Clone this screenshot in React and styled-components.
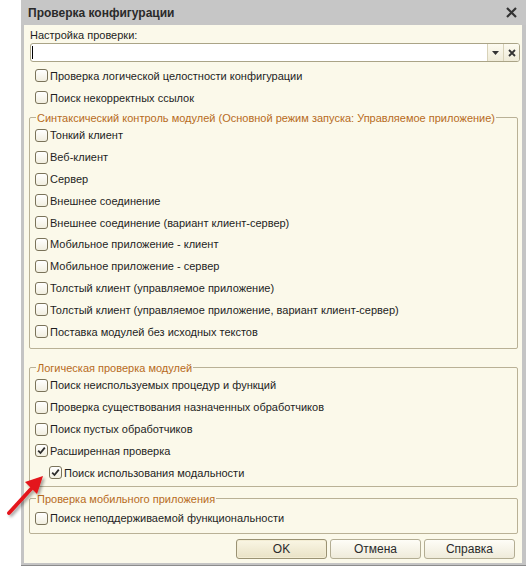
import React from 'react';
import styled, { createGlobalStyle } from 'styled-components';

const GlobalStyle = createGlobalStyle`
  html, body {
    margin: 0;
    padding: 0;
    background: #ffffff;
  }
  body {
    font-family: Arial, "Liberation Sans", sans-serif;
    font-size: 11px;
    color: #1e1e1e;
  }
`;

const Page = styled.div`
  position: relative;
  width: 526px;
  height: 567px;
  overflow: hidden;
`;

const Window = styled.div`
  margin-left: 21px;
  width: 498px;
  height: 563px;
  display: flex;
  flex-direction: column;
  background: #fbf9ea;
  border-left: 3px solid #c4c4c4;
  border-right: 4px solid #c4c4c4;
  border-bottom: 2px solid #c4c4c4;
  box-shadow: 0 1px 0 #8c8c8c;
`;

const TitleBar = styled.div`
  height: 25px;
  flex: none;
  display: flex;
  align-items: center;
  justify-content: space-between;
  background: #c6c6c6;
  margin-left: -3px;
  margin-right: -4px;
  padding: 0 9px 0 7px;
`;

const Title = styled.div`
  font-weight: bold;
  font-size: 12px;
  color: #2a2a2a;
`;

const Close = styled.svg`
  width: 11px;
  height: 11px;
`;

const Content = styled.div`
  flex: 1;
  display: flex;
  flex-direction: column;
  padding: 3px 4px 0 5px;
`;

const Label = styled.div`
  height: 15px;
  line-height: 15px;
  padding-left: 1px;
`;

const Field = styled.div`
  height: 17px;
  margin: 0 -2px 3px 1px;
  display: flex;
  border: 1px solid #aaa487;
  border-radius: 3px;
  background: #ffffff;
  overflow: hidden;
`;

const Input = styled.div`
  flex: 1;
  position: relative;
  &::before {
    content: '';
    position: absolute;
    left: 1px;
    top: 2px;
    width: 1px;
    height: 13px;
    background: #000;
  }
`;

const FieldButton = styled.div`
  width: 15px;
  display: flex;
  align-items: center;
  justify-content: center;
  background: linear-gradient(#fdfbf0, #efebd8);
  border-left: 1px solid #d8d2b8;
`;

const Row = styled.label`
  height: 21.8px;
  display: flex;
  align-items: center;
  gap: 2px;
  padding-left: 6px;
  white-space: nowrap;
`;

const Box = styled.span`
  width: 11px;
  height: 11px;
  flex: none;
  border: 1px solid #7a735a;
  border-radius: 3px;
  background: linear-gradient(#ffffff, #f1eedf);
  display: flex;
  align-items: center;
  justify-content: center;
`;

const Group = styled.fieldset`
  margin: ${p => p.$top}px 0 0 0;
  padding: ${p => p.$padTop || 0}px 0 ${p => p.$bottom}px 0;
  border: 1px solid #b9b196;
  border-radius: 2px;
  min-width: 0;

  ${Row} {
    padding-left: 5px;
  }
  ${Row}[data-indent] {
    padding-left: 19px;
  }
`;

const Legend = styled.legend`
  margin-left: 6px;
  padding: 0 1px;
  line-height: 14px;
  white-space: nowrap;
  color: #b76b1c;
`;

const Buttons = styled.div`
  display: flex;
  justify-content: flex-end;
  gap: 3px;
  margin-top: 5px;
  padding-right: 3px;
`;

const Button = styled.div`
  width: 89px;
  height: 18px;
  display: flex;
  align-items: center;
  justify-content: center;
  border: 1px solid ${p => p.$default ? '#9a9273' : '#b3ad93'};
  border-radius: 3px;
  background: ${p => p.$default
    ? 'linear-gradient(#faf6e4, #e9e2c6)'
    : 'linear-gradient(#fefdf7, #efebda)'};
  box-shadow: ${p => p.$default ? 'inset 0 0 0 1px #f3edd4' : 'none'};
  font-size: 12px;
  color: #2a2a2a;
`;

const Arrow = styled.svg`
  position: absolute;
  left: 0;
  top: 466px;
  width: 56px;
  height: 60px;
`;

const Check = ({ checked }) => (
  <Box>
    {checked && (
      <svg width="9" height="9" viewBox="0 0 9 9">
        <path d="M1.2 4.6 L3.5 7 L7.8 1.6" fill="none" stroke="#2b2b2b" strokeWidth="1.8" />
      </svg>
    )}
  </Box>
);

const Option = ({ text, checked, indent }) => (
  <Row data-indent={indent ? '' : undefined}>
    <Check checked={checked} />
    <span>{text}</span>
  </Row>
);

const syntax = [
  'Тонкий клиент',
  'Веб-клиент',
  'Сервер',
  'Внешнее соединение',
  'Внешнее соединение (вариант клиент-сервер)',
  'Мобильное приложение - клиент',
  'Мобильное приложение - сервер',
  'Толстый клиент (управляемое приложение)',
  'Толстый клиент (управляемое приложение, вариант клиент-сервер)',
  'Поставка модулей без исходных текстов',
];

export default function App() {
  return (
    <Page>
      <GlobalStyle />
      <Window>
        <TitleBar>
          <Title>Проверка конфигурации</Title>
          <Close viewBox="0 0 11 11">
            <path d="M1 1 L10 10 M10 1 L1 10" stroke="#333" strokeWidth="2.2" />
          </Close>
        </TitleBar>
        <Content>
          <Label>Настройка проверки:</Label>
          <Field>
            <Input />
            <FieldButton>
              <svg width="7" height="4" viewBox="0 0 7 4"><path d="M0 0 H7 L3.5 4 Z" fill="#333" /></svg>
            </FieldButton>
            <FieldButton>
              <svg width="8" height="8" viewBox="0 0 8 8">
                <path d="M1 1 L7 7 M7 1 L1 7" stroke="#333" strokeWidth="1.8" />
              </svg>
            </FieldButton>
          </Field>
          <Option text="Проверка логической целостности конфигурации" />
          <Option text="Поиск некорректных ссылок" />

          <Group $top={2} $bottom={5}>
            <Legend>Синтаксический контроль модулей (Основной режим запуска: Управляемое приложение)</Legend>
            {syntax.map(t => <Option key={t} text={t} />)}
          </Group>

          <Group $top={12} $bottom={2}>
            <Legend>Логическая проверка модулей</Legend>
            <Option text="Поиск неиспользуемых процедур и функций" />
            <Option text="Проверка существования назначенных обработчиков" />
            <Option text="Поиск пустых обработчиков" />
            <Option text="Расширенная проверка" checked />
            <Option text="Поиск использования модальности" checked indent />
          </Group>

          <Group $top={5} $padTop={2} $bottom={4}>
            <Legend>Проверка мобильного приложения</Legend>
            <Option text="Поиск неподдерживаемой функциональности" />
          </Group>

          <Buttons>
            <Button $default>OK</Button>
            <Button>Отмена</Button>
            <Button>Справка</Button>
          </Buttons>
        </Content>
      </Window>
      <Arrow viewBox="0 0 56 60">
        <defs>
          <filter id="sh" x="-30%" y="-30%" width="160%" height="160%">
            <feDropShadow dx="2" dy="2" stdDeviation="1.5" floodColor="#000" floodOpacity="0.35" />
          </filter>
        </defs>
        <g filter="url(#sh)">
          <path d="M9 47 L31 23" stroke="#e4141b" strokeWidth="3.8" strokeLinecap="round" />
          <path d="M43 10 L25 16 L37 28 Z" fill="#e4141b" />
        </g>
      </Arrow>
    </Page>
  );
}
